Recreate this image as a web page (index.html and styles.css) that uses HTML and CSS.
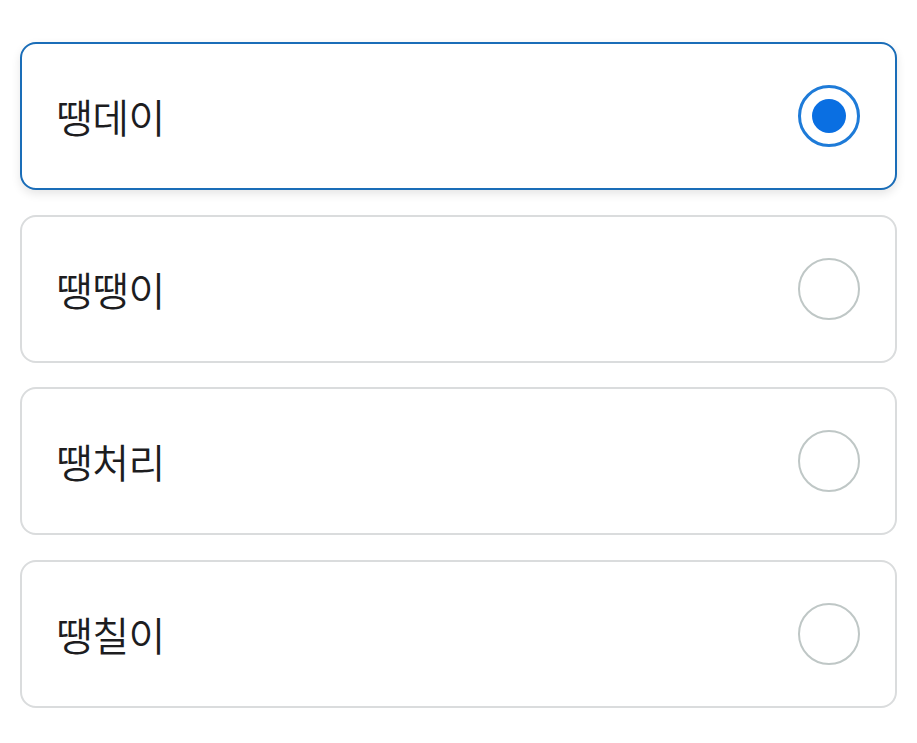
FILE: index.html
```html
<!DOCTYPE html>
<html lang="ko">
<head>
<meta charset="utf-8">
<link rel="stylesheet" href="styles.css">
</head>
<body>
<div class="list">
  <label class="option selected">
    <span class="label">땡데이</span>
    <span class="radio"><span class="dot"></span></span>
  </label>
  <label class="option">
    <span class="label">땡땡이</span>
    <span class="radio"></span>
  </label>
  <label class="option">
    <span class="label">땡처리</span>
    <span class="radio"></span>
  </label>
  <label class="option">
    <span class="label">땡칠이</span>
    <span class="radio"></span>
  </label>
</div>
</body>
</html>
```
FILE: styles.css
```css
html, body {
  margin: 0;
  padding: 0;
  background: #ffffff;
}
body {
  font-family: "Noto Sans CJK KR", "Noto Sans", sans-serif;
}
.list {
  display: flex;
  flex-direction: column;
  gap: 24.7px;
  padding: 42px 20px 0 20px;
}
.option {
  box-sizing: border-box;
  height: 148px;
  border: 2px solid #dadcdd;
  border-radius: 16px;
  display: flex;
  align-items: center;
  justify-content: space-between;
  padding: 0 35px 0 34px;
  background: #fff;
}
.option.selected {
  border-color: #1a6db8;
  box-shadow: 0 4px 10px rgba(0, 0, 0, 0.10);
}
.label {
  font-size: 40px;
  font-weight: 350;
  color: #1d1d1f;
  line-height: 1;
  letter-spacing: -0.5px;
}
.radio {
  box-sizing: border-box;
  width: 62px;
  height: 62px;
  border-radius: 50%;
  border: 2px solid #bfc7c6;
  display: flex;
  align-items: center;
  justify-content: center;
}
.selected .radio {
  border: 3px solid #1e7bd8;
}
.dot {
  width: 34px;
  height: 34px;
  border-radius: 50%;
  background: #0a6fe2;
}
```
